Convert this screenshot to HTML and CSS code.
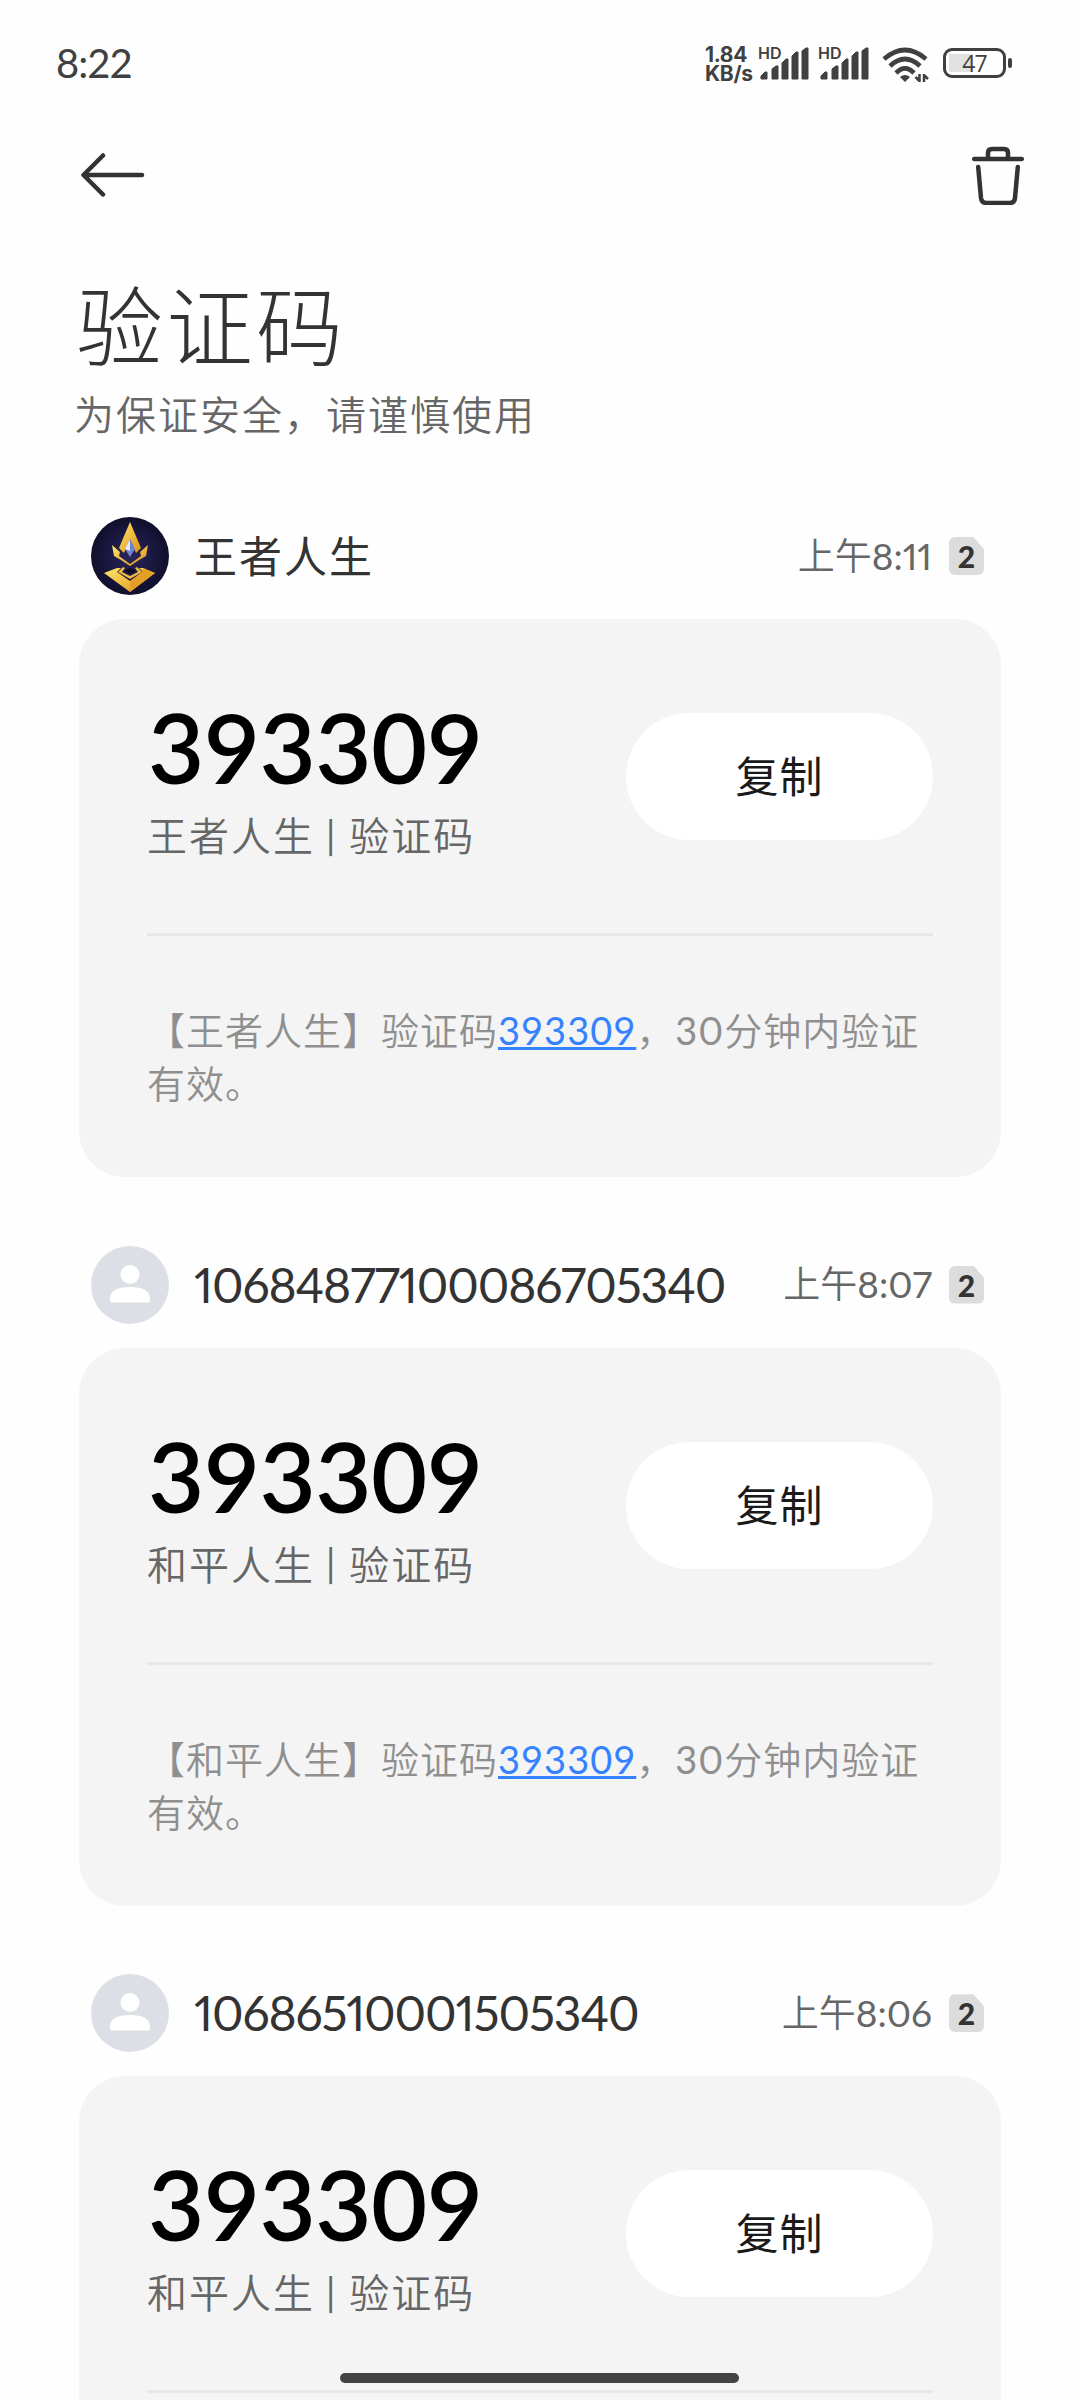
FILE: index.html
```html
<!DOCTYPE html>
<html lang="zh-CN">

<head>
  <meta charset="UTF-8">
  <meta name="viewport" content="width=device-width, initial-scale=1.0">
  <title>验证码</title>
  <link rel="stylesheet" href="styles.css">
</head>

<body>
  <div class="status-bar">
    <span class="clock">8:22</span>
    <div class="status-icons">
      <div class="speed"><span>1.84</span><span>KB/s</span></div>
      <div class="signal">
        <span class="hd">HD</span>
        <svg width="50" height="34" viewBox="0 0 50 34" fill="#404040">
          <path d="M2 32v-3l4-4h2v7zM13 32V22l4-3h2v13zM23 32V16l4-4h2v20zM33 32V9l4-4h2v27zM43 32V4l4-3h2v31z" stroke="#404040" stroke-linejoin="round" />
        </svg>
      </div>
      <div class="signal">
        <span class="hd">HD</span>
        <svg width="50" height="34" viewBox="0 0 50 34" fill="#404040">
          <path d="M2 32v-3l4-4h2v7zM13 32V22l4-3h2v13zM23 32V16l4-4h2v20zM33 32V9l4-4h2v27zM43 32V4l4-3h2v31z" stroke="#404040" stroke-linejoin="round" />
        </svg>
      </div>
      <svg class="wifi" width="48" height="36" viewBox="0 0 48 36" fill="none" stroke="#404040" stroke-width="4.6">
        <path d="M2 12Q23-6 44 12M8 19Q23 5 38 19M14 26Q23 17 32 26" />
        <path d="M18 30q5-4 10 0l-5 5z" fill="#404040" stroke="none" />
        <path d="M37.500 27v8M37.500 34l-4-4M42 35v-8M42 28l4 4" stroke-width="2.500" />
      </svg>
      <div class="battery"><span class="level">47</span></div>
      <div class="battery-tip"></div>
    </div>
  </div>

  <div class="toolbar">
    <svg width="64" height="46" viewBox="0 0 64 46" fill="none" stroke="#333" stroke-width="4.500" stroke-linecap="round" stroke-linejoin="round">
      <path d="M61 23H3M22 3.500L2.500 23L22 42.500" />
    </svg>
    <svg width="52" height="60" viewBox="0 0 52 60" fill="none" stroke="#333" stroke-width="4.500" stroke-linecap="round" stroke-linejoin="round">
      <path d="M2.200 14H49.800M16 14V8q0-4 4-4h12q4 0 4 4v6M6.200 22L9 53q.6 5 5.500 5h23q5 0 5.500-5L45.800 22" />
    </svg>
  </div>

  <h1>验证码</h1>
  <p class="subtitle">为保证安全，请谨慎使用</p>

  <div class="list">
    <div class="message">
      <div class="sender">
        <svg class="avatar" viewBox="0 0 78 78">
          <defs>
            <linearGradient id="gold" x1="0" y1="0" x2="1" y2="1">
              <stop offset="0" stop-color="#ffe66a" />
              <stop offset="1" stop-color="#dc9117" />
            </linearGradient>
            <radialGradient id="night">
              <stop offset="0" stop-color="#29255c" />
              <stop offset="1" stop-color="#100f2c" />
            </radialGradient>
          </defs>
          <circle cx="39" cy="39" r="39" fill="url(#night)" />
          <path d="M39 5L28 31l5 5 6-14 6 14 5-5z" fill="url(#gold)" />
          <path d="M21 28l8 7-1 4 11 8 11-8-1-4 8-7-2 11-7 4-9 6-9-6-7-4z" fill="url(#gold)" />
          <path d="M39 22l-5 10 5 8 5-8z" fill="#7183c9" />
          <path d="M39 22l-5 10 5 2z" fill="#e4e9ff" />
          <path d="M26 51h4l-4 4 13 9 13-9-4-4h4l12 5-25 19-26-19z" fill="url(#gold)" />
          <path d="M39 64v11l25-19-12-5-1 4z" fill="#e39f26" />
          <path d="M32 50l-5 5 12 7 12-7-5-5-2 1 3 4-8 4-8-4 3-4z" fill="#eebc42" />
          <path d="M33 54l6-3 6 3-6 3z" fill="#0b0b24" />
        </svg>
        <span class="name">王者人生</span>
        <span class="time">上午<span class="digits">8:11</span></span>
        <span class="sim">2</span>
      </div>
      <div class="card">
        <div class="card-top">
          <div>
            <div class="code">393309</div>
            <div class="source">王者人生<span class="bar">|</span>验证码</div>
          </div>
          <button>复制</button>
        </div>
        <p class="content">【王者人生】验证码<a>393309</a>，<span class="digits">30</span>分钟内验证有效。</p>
      </div>
    </div>

    <div class="message">
      <div class="sender">
        <svg class="avatar" viewBox="0 0 78 78">
          <circle cx="39" cy="39" r="39" fill="#dce0e6" />
          <circle cx="39" cy="28.500" r="9.500" fill="#fff" />
          <path d="M19 53q0-12 20-12t20 12v1q0 2.500-2.500 2.500h-35q-2.500 0-2.500-2.500z" fill="#fff" />
        </svg>
        <span class="name number">10684877100086705340</span>
        <span class="time">上午<span class="digits">8:07</span></span>
        <span class="sim">2</span>
      </div>
      <div class="card">
        <div class="card-top">
          <div>
            <div class="code">393309</div>
            <div class="source">和平人生<span class="bar">|</span>验证码</div>
          </div>
          <button>复制</button>
        </div>
        <p class="content">【和平人生】验证码<a>393309</a>，<span class="digits">30</span>分钟内验证有效。</p>
      </div>
    </div>

    <div class="message last">
      <div class="sender">
        <svg class="avatar" viewBox="0 0 78 78">
          <circle cx="39" cy="39" r="39" fill="#dce0e6" />
          <circle cx="39" cy="28.500" r="9.500" fill="#fff" />
          <path d="M19 53q0-12 20-12t20 12v1q0 2.500-2.500 2.500h-35q-2.500 0-2.500-2.500z" fill="#fff" />
        </svg>
        <span class="name number">10686510001505340</span>
        <span class="time">上午<span class="digits">8:06</span></span>
        <span class="sim">2</span>
      </div>
      <div class="card">
        <div class="card-top">
          <div>
            <div class="code">393309</div>
            <div class="source">和平人生<span class="bar">|</span>验证码</div>
          </div>
          <button>复制</button>
        </div>
      </div>
    </div>
  </div>

  <div class="home-indicator"></div>
</body>

</html>
```
FILE: styles.css
```css
* {
  box-sizing: border-box;
}

body {
  margin: 0;
  width: 1080px;
  height: 2400px;
  overflow: hidden;
  position: relative;
  background: #fefefe;
  color: #333;
  font-family: "Noto Sans CJK SC", sans-serif;
}

svg {
  display: block;
  flex: none;
}

.status-bar {
  height: 126px;
  padding: 0 68px 0 56px;
  display: flex;
  align-items: center;
  justify-content: space-between;
}

.clock {
  font-family: Lato, sans-serif;
  font-size: 40px;
  letter-spacing: -1px;
  color: #404040;
}

.status-icons {
  display: flex;
  align-items: center;
  color: #404040;
}

.speed {
  display: flex;
  flex-direction: column;
  width: 54px;
  margin-top: 2px;
  font: bold 21px/19px Inter, sans-serif;
  letter-spacing: -0.3px;
}

.signal {
  position: relative;
  width: 60px;
  display: flex;
  align-items: center;
}

.signal svg {
  margin: 2px 0 0;
}

.hd {
  position: absolute;
  left: -1px;
  top: 0;
  font: 600 16px/16px Inter, sans-serif;
}

.wifi {
  margin: 3px 13px 0 3px;
}

.battery {
  width: 63px;
  height: 30px;
  border: 3px solid #404040;
  border-radius: 9px;
  background: linear-gradient(#e2e2e2, #e2e2e2) 3px 3px / 24px 18px no-repeat;
  text-align: center;
}

.level {
  display: block;
  font: 23px/25px "Open Sans", sans-serif;
  letter-spacing: -1px;
}

.battery-tip {
  width: 4px;
  height: 10px;
  margin-left: 2px;
  border-radius: 2px;
  background: #404040;
}

.toolbar {
  height: 97px;
  padding: 0 56px 0 81px;
  display: flex;
  align-items: center;
  justify-content: space-between;
}

h1 {
  margin: 39px 0 0 76px;
  font-size: 87px;
  line-height: 120px;
  font-weight: 300;
  letter-spacing: 3px;
}

.subtitle {
  margin: 1px 0 0 74px;
  font-size: 40px;
  line-height: 60px;
  font-weight: 350;
  letter-spacing: 2px;
  color: #666;
}

.list {
  padding: 74px 79px 0;
}

.message {
  height: 728.6px;
}

.sender {
  height: 78px;
  padding: 0 17px 0 12px;
  display: flex;
  align-items: center;
}

.avatar {
  width: 78px;
  height: 78px;
}

.name {
  margin: -4px 0 0 25px;
  font-size: 43px;
  line-height: 60px;
  letter-spacing: 2px;
}

.number {
  margin: 0 0 0 25px;
  font-family: Lato, sans-serif;
  font-size: 48px;
  letter-spacing: -1.1px;
  font-variant-numeric: proportional-nums;
}

.time {
  margin: -3px 0 0 auto;
  font-size: 37px;
  line-height: 50px;
  font-weight: 350;
  color: #666;
}

.digits {
  font-family: Lato, sans-serif;
  font-weight: 400;
  font-variant-numeric: proportional-nums;
}

.sim {
  width: 35px;
  height: 38px;
  margin-left: 17px;
  background: #dcdcdc;
  border-radius: 6px;
  clip-path: polygon(0 0, 70% 0, 100% 32%, 100% 100%, 0 100%);
  font: 900 30px/38px Lato, sans-serif;
  text-align: center;
}

.card {
  height: 558px;
  margin-top: 24px;
  padding: 0 68px;
  border-radius: 46px;
  background: #f4f4f4;
}

/* the last card runs to the bottom of the screen */
.last,
.last .card {
  height: auto;
}

.last .card {
  padding-bottom: 8px;
  border-radius: 46px 46px 0 0;
}

.card-top {
  height: 317px;
  padding-top: 68px;
  border-bottom: 3px solid #e8e8e8;
  display: flex;
  justify-content: space-between;
}

.code {
  margin-left: 1px;
  font: 600 97px/120px Lato, sans-serif;
  letter-spacing: -0.5px;
  color: #000;
}

.source {
  display: flex;
  align-items: center;
  margin-top: -3px;
  font-size: 40px;
  line-height: 60px;
  font-weight: 350;
  letter-spacing: 2px;
  color: #666;
}

.bar {
  margin: -3px 12px 0 11px;
  font: 500 33px/40px "Noto Sans CJK SC", sans-serif;
}

button {
  width: 307px;
  height: 127px;
  margin-top: 26px;
  padding: 0 0 5px;
  border: none;
  border-radius: 64px;
  background: #fff;
  color: #1a1a1a;
  font-family: inherit;
  font-size: 43px;
  letter-spacing: 1px;
}

.content {
  margin: 67px 0 0;
  font-size: 38px;
  line-height: 51px;
  font-weight: 350;
  letter-spacing: 1px;
  color: #8f8f8f;
}

.content a {
  font-family: Lato, sans-serif;
  font-weight: 400;
  color: #3482ff;
  text-decoration: underline;
}

.home-indicator {
  position: absolute;
  left: 340px;
  bottom: 17px;
  width: 399px;
  height: 10px;
  border-radius: 5px;
  background: #444;
}
```
